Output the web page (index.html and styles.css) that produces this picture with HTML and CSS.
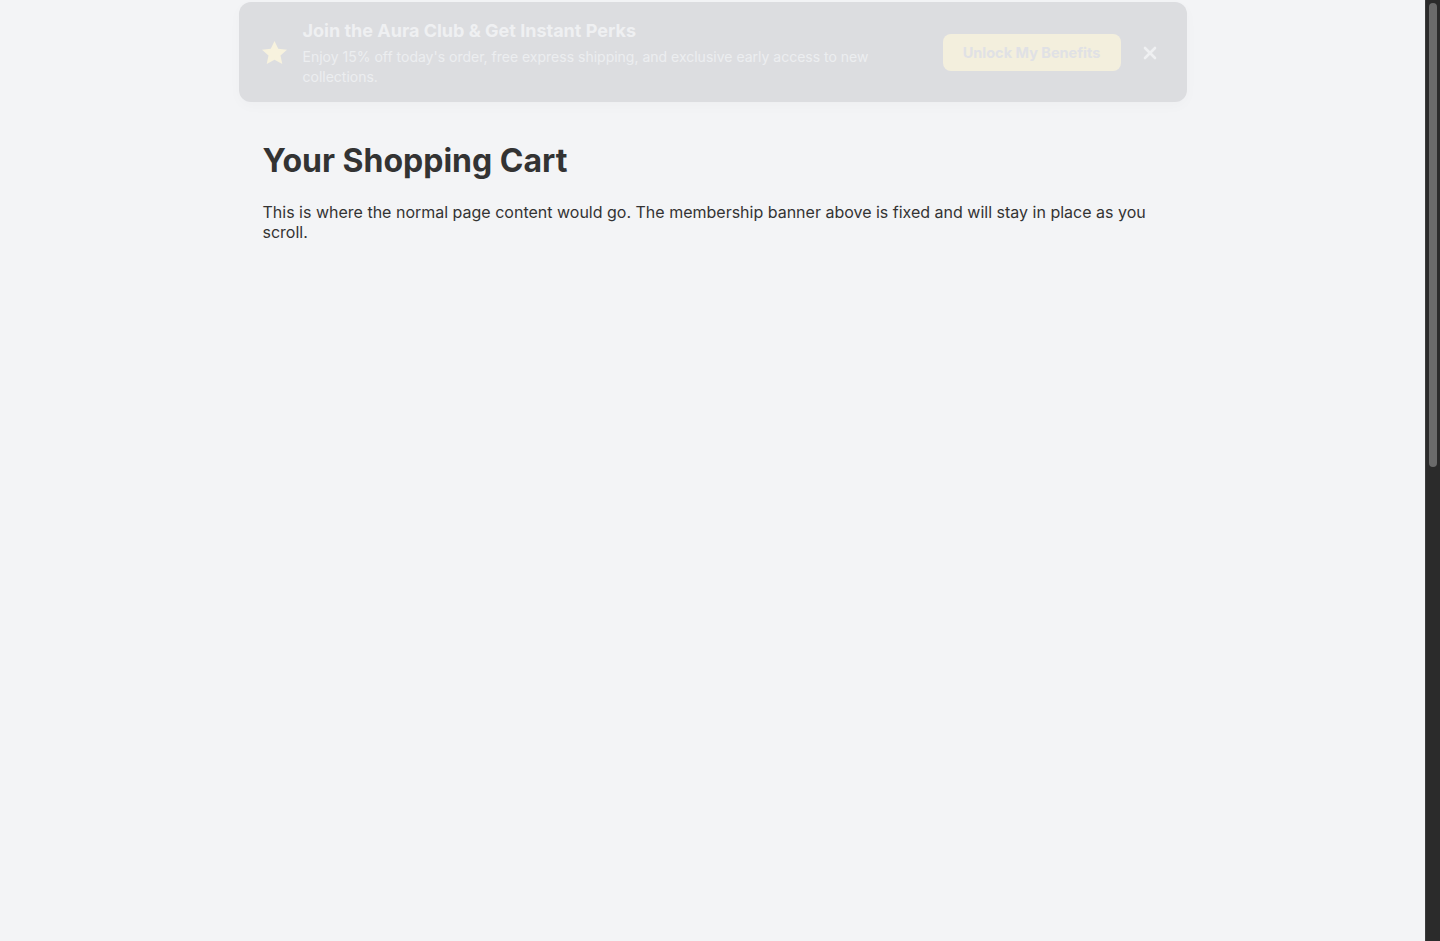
FILE: index.html
```html
<!DOCTYPE html>
<html lang="en">
<head>
<meta charset="utf-8">
<title>Your Shopping Cart</title>
<link rel="stylesheet" href="styles.css">
</head>
<body>
<div class="window">
  <div class="page">
    <div class="banner-wrap">
      <aside class="banner">
        <svg class="star" viewBox="1.8 1.8 20.4 19.4" width="25" height="23" preserveAspectRatio="none" aria-hidden="true">
          <path d="M12 1.8l3.05 6.55 7.15.85-5.3 4.9 1.45 7.1L12 17.6l-6.35 3.6 1.45-7.1-5.3-4.9 7.15-.85z" fill="#f7f2de"/>
        </svg>
        <div class="banner-text">
          <h2 class="banner-title">Join the Aura Club &amp; Get Instant Perks</h2>
          <p class="banner-desc">Enjoy 15% off today's order, free express shipping, and exclusive early access to new collections.</p>
        </div>
        <button class="cta" type="button">Unlock My Benefits</button>
        <button class="close" type="button" aria-label="Close">
          <svg viewBox="0 0 14 14" width="14" height="14" aria-hidden="true">
            <path d="M2 2L12 12M12 2L2 12" stroke="#eff0f2" stroke-width="2.6" stroke-linecap="round"/>
          </svg>
        </button>
      </aside>
    </div>
    <main class="content">
      <h1 class="title">Your Shopping Cart</h1>
      <p class="lead">This is where the normal page content would go. The membership banner above is fixed and will stay in place as you scroll.</p>
    </main>
  </div>
  <div class="scrollbar" aria-hidden="true">
    <div class="scrollbar-thumb"></div>
  </div>
</div>
</body>
</html>
```

FILE: styles.css
```css
body {
  margin: 0;
  background: #f3f4f6;
  color: #333333;
  font-family: Inter, "Noto Sans", "Liberation Sans", sans-serif;
}

.window {
  display: flex;
  height: 100vh;
  overflow: hidden;
}

.page {
  flex: 1;
  min-width: 0;
  background: #f3f4f6;
}

.scrollbar {
  flex: none;
  width: 14px;
  background: #2b2b2b;
  border-left: 1px solid #3c3c3c;
  padding-top: 3px;
}

.scrollbar-thumb {
  width: 8px;
  height: 464px;
  margin-left: 3px;
  border-radius: 4px;
  background: #6b6b6b;
}

.banner-wrap {
  max-width: 948px;
  margin: 0 auto;
  padding-top: 2px;
}

.banner {
  display: flex;
  align-items: center;
  gap: 16px;
  padding: 16px 24px 15px;
  background: #dcdde0;
  border-radius: 12px;
  box-shadow: 0 4px 14px rgba(0, 0, 0, 0.025);
}

.star {
  flex: none;
  display: block;
  margin-left: -1px;
}

.banner-text {
  flex: 1;
  min-width: 0;
  margin-right: 8px;
}

.banner-title {
  margin: 0;
  font-size: 18px;
  line-height: 25px;
  font-weight: 700;
  color: #eff0f2;
}

.banner-desc {
  margin: 4px 0 0;
  font-size: 14px;
  line-height: 20px;
  color: #eceef0;
}

.cta {
  flex: none;
  width: 178px;
  height: 37px;
  border: 0;
  border-radius: 8px;
  background: #f3efdd;
  color: #e0e1e5;
  font-family: inherit;
  font-size: 14.5px;
  font-weight: 700;
  padding: 0;
}

.close {
  flex: none;
  width: 26px;
  height: 26px;
  border: 0;
  background: transparent;
  padding: 0;
  display: flex;
  align-items: center;
  justify-content: center;
}

.close svg {
  display: block;
}

.content {
  max-width: 900px;
  margin: 0 auto;
  padding: 24px 24px;
}

.title {
  margin: 16px 0 0;
  font-size: 32px;
  line-height: 1.2;
  font-weight: 700;
  color: #333333;
}

.lead {
  margin: 22px 0 0;
  font-size: 16px;
  line-height: 20px;
  color: #333333;
}
```
